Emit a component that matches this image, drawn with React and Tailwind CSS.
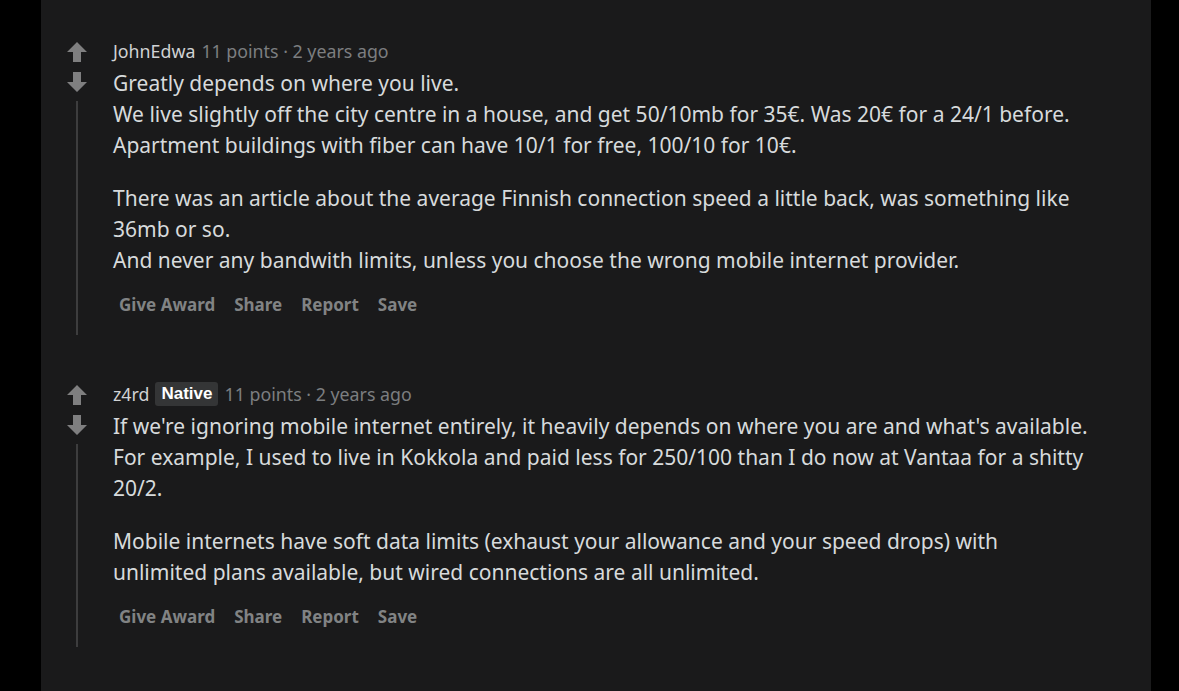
import React from 'react'

const font = { fontFamily: '"Noto Sans", "Open Sans", Arial, sans-serif' }

function UpArrow() {
  return (
    <svg width="22" height="22" viewBox="0 0 22 22" className="block">
      <path d="M11 1 L21 11 L15 11 L15 21 L7 21 L7 11 L1 11 Z" fill="#7f7f80" />
    </svg>
  )
}

function DownArrow() {
  return (
    <svg width="22" height="22" viewBox="0 0 22 22" className="block">
      <path d="M11 21 L21 11 L15 11 L15 1 L7 1 L7 11 L1 11 Z" fill="#7f7f80" />
    </svg>
  )
}

const ACTIONS = ['Give Award', 'Share', 'Report', 'Save']

function Comment({ author, flair, paragraphs }) {
  return (
    <div className="flex">
      {/* vote column + thread line */}
      <div className="flex w-[24px] flex-col items-center pt-[2px]">
        <UpArrow />
        <div className="h-[8px]" />
        <DownArrow />
        <div className="mt-[8px] w-[2px] flex-1 bg-[#3d3d3e]" />
      </div>

      <div className="ml-[24px] flex-1 pb-[14px]">
        <div className="flex h-[24px] items-center text-[17.8px] leading-[24px]">
          <span className="text-[#d0d2d4]">{author}</span>
          {flair && (
            <span className="ml-[6px] rounded-[3px] bg-[#343536] px-[6px] font-['Liberation_Sans',Arial,sans-serif] text-[17px] font-bold leading-[24px] text-white">
              {flair}
            </span>
          )}
          <span className="ml-[6px] text-[#7c7e80]">11 points · 2 years ago</span>
        </div>

        <div className="mt-[5px] whitespace-nowrap text-[21px] leading-[31px] text-[#d7dadc]">
          {paragraphs.map((p, i) => (
            <p key={i} className={i > 0 ? 'mt-[22px]' : ''}>
              {p.map((line, j) => (
                <React.Fragment key={j}>
                  {j > 0 && <br />}
                  {line}
                </React.Fragment>
              ))}
            </p>
          ))}
        </div>

        <div className="mt-[13px] flex gap-[7px] text-[17px] font-bold leading-[24px] text-[#818384]">
          {ACTIONS.map((a) => (
            <button key={a} className="px-[6px] py-[4px]">{a}</button>
          ))}
        </div>
      </div>
    </div>
  )
}

export default function App() {
  return (
    <div className="h-[691px] w-[1179px] overflow-hidden bg-black" style={font}>
      <div className="mx-[41px] h-full w-[1110px] bg-[#1a1a1b] pl-[24px] pt-[39px]">
        <Comment
          author="JohnEdwa"
          paragraphs={[
            [
              'Greatly depends on where you live.',
              'We live slightly off the city centre in a house, and get 50/10mb for 35€. Was 20€ for a 24/1 before.',
              'Apartment buildings with fiber can have 10/1 for free, 100/10 for 10€.',
            ],
            [
              'There was an article about the average Finnish connection speed a little back, was something like',
              '36mb or so.',
              'And never any bandwith limits, unless you choose the wrong mobile internet provider.',
            ],
          ]}
        />
        <div className="h-[47px]" />
        <Comment
          author="z4rd"
          flair="Native"
          paragraphs={[
            [
              "If we're ignoring mobile internet entirely, it heavily depends on where you are and what's available.",
              'For example, I used to live in Kokkola and paid less for 250/100 than I do now at Vantaa for a shitty',
              '20/2.',
            ],
            [
              'Mobile internets have soft data limits (exhaust your allowance and your speed drops) with',
              'unlimited plans available, but wired connections are all unlimited.',
            ],
          ]}
        />
      </div>
    </div>
  )
}
